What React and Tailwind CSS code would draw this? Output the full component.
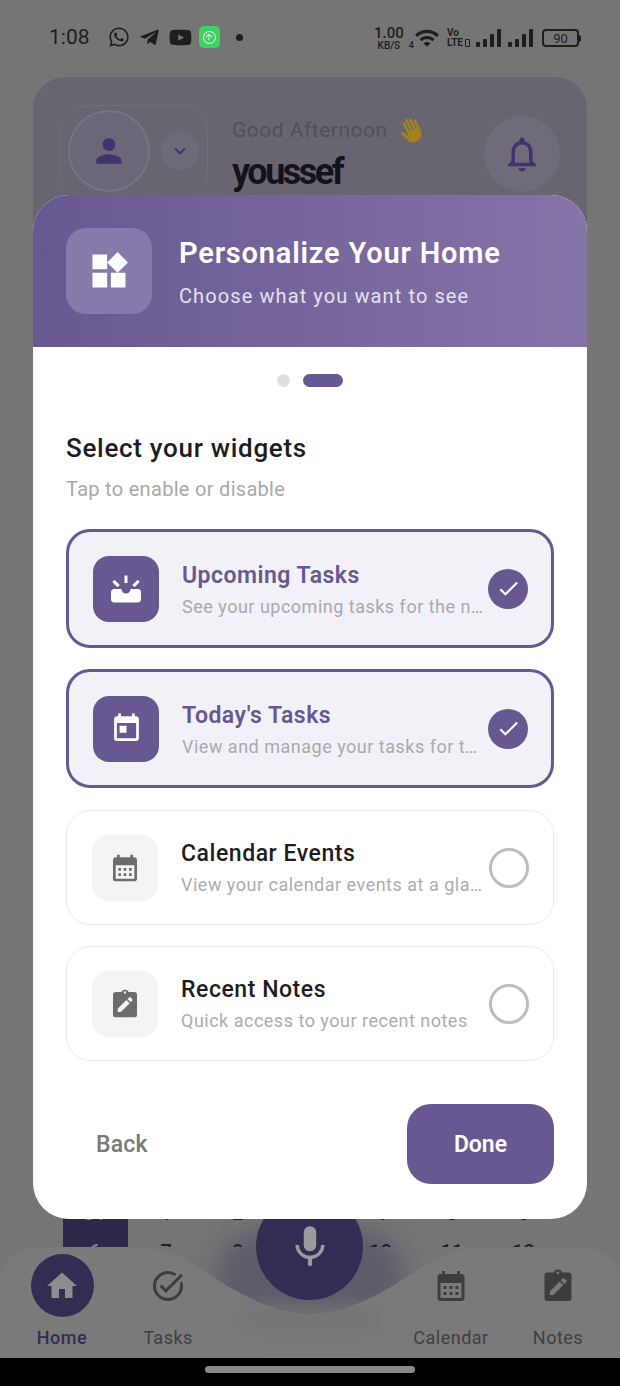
import React from "react";
import { FaWhatsapp, FaTelegramPlane, FaYoutube } from "react-icons/fa";
import {
  MdArrowUpward,
  MdBackHand,
  MdCalendarMonth,
  MdCheck,
  MdHome,
  MdKeyboardArrowDown,
  MdMic,
  MdOutlineNotifications,
  MdOutlineTaskAlt,
  MdPerson,
  MdToday,
  MdUpcoming,
  MdWidgets,
  MdWifi,
} from "react-icons/md";

const font = { fontFamily: "Roboto, sans-serif" };

function NoteIcon({ className }) {
  return (
    <svg viewBox="0 0 24 24" className={className} fill="currentColor">
      <path
        fillRule="evenodd"
        d="M5 3h4.2a3 3 0 0 1 5.6 0H19a2 2 0 0 1 2 2v15a2 2 0 0 1-2 2H5a2 2 0 0 1-2-2V5a2 2 0 0 1 2-2Zm7-.6a.9.9 0 1 0 0 1.8.9.9 0 0 0 0-1.8ZM6.5 18h2.4l6.6-6.6-2.4-2.4-6.6 6.6V18Zm9.8-7.4 1.2-1.2a.7.7 0 0 0 0-1l-1.4-1.4a.7.7 0 0 0-1 0l-1.2 1.2 2.4 2.4Z"
      />
    </svg>
  );
}

function Signal() {
  return (
    <div className="flex items-end gap-[3px]">
      <div className="h-[5px] w-[4px] rounded-[1px] bg-[#1c1c1c]" />
      <div className="h-[8px] w-[4px] rounded-[1px] bg-[#1c1c1c]" />
      <div className="h-[13px] w-[4px] rounded-[1px] bg-[#1c1c1c]" />
      <div className="h-[18px] w-[4px] rounded-[1px] bg-[#1c1c1c]" />
    </div>
  );
}

function StatusBar() {
  return (
    <div className="flex h-[77px] shrink-0 items-start justify-between pl-[49px] pr-[39px] pt-[24px] text-[#1e1e1e]">
      <div className="flex items-center">
        <span className="text-[21px] leading-[26px]">1:08</span>
        <FaWhatsapp className="ml-[18px] text-[22px]" />
        <FaTelegramPlane className="ml-[9px] text-[21px]" />
        <FaYoutube className="ml-[9px] text-[23px]" />
        <div className="ml-[7px] flex h-[22px] w-[21px] items-center justify-center rounded-[5px] bg-[#3bd45f]">
          <div className="flex h-[13px] w-[13px] items-center justify-center rounded-full border border-white">
            <MdArrowUpward className="text-[10px] text-white" />
          </div>
        </div>
        <div className="ml-[16px] h-[7px] w-[7px] rounded-full bg-[#1e1e1e]" />
      </div>
      <div className="flex items-center pt-[1px]">
        <div className="flex flex-col items-center">
          <span className="text-[15px] font-medium leading-[15px]">1.00</span>
          <span className="text-[10px] font-medium leading-[10px]">KB/S</span>
        </div>
        <span className="ml-[5px] self-end text-[9px] font-medium leading-[12px]">4</span>
        <MdWifi className="text-[26px]" />
        <div className="ml-[7px] flex flex-col items-start text-[10px] font-bold leading-[10px]">
          <span>Vo</span>
          <span>LTE</span>
        </div>
        <div className="ml-[2px] mt-[9px] h-[8px] w-[5px] rounded-[1px] border border-[#1e1e1e]" />
        <div className="ml-[6px]">
          <Signal />
        </div>
        <div className="ml-[7px]">
          <Signal />
        </div>
        <div className="ml-[9px] flex h-[18px] w-[37px] items-center justify-center rounded-[4px] border-2 border-[#1e1e1e] text-[13px] leading-none">
          90
        </div>
        <div className="h-[7px] w-[2px] rounded-r bg-[#1e1e1e]" />
      </div>
    </div>
  );
}

function HomeBehind() {
  return (
    <div className="mx-[33px] flex h-[240px] shrink-0 items-start rounded-[32px] bg-[#686571] pl-[27px] pr-[27px] pt-[28px]">
      <div className="flex h-[92px] w-[148px] shrink-0 items-center rounded-[24px] border border-[#716e79] pl-[7px]">
        <div className="flex h-[82px] w-[82px] items-center justify-center rounded-full border-2 border-[#767382] bg-[#6b6778]">
          <MdPerson className="text-[38px] text-[#42336f]" />
        </div>
        <div className="ml-[11px] flex h-[38px] w-[38px] items-center justify-center rounded-full bg-[#6d6a7a]">
          <MdKeyboardArrowDown className="text-[22px] text-[#42336f]" />
        </div>
      </div>
      <div className="ml-[24px] flex-1 pt-[12px]">
        <div className="flex items-center text-[21px] leading-[26px] tracking-[0.5px] text-[#525056]">
          Good Afternoon
          <MdBackHand className="ml-[10px] rotate-[-25deg] text-[25px] text-[#a5801f]" />
        </div>
        <div className="mt-[9px] text-[36px] font-bold leading-[40px] tracking-[-2.5px] text-[#14131c]">youssef</div>
      </div>
      <div className="mt-[11px] flex h-[76px] w-[76px] items-center justify-center rounded-full bg-[#6f6b79]">
        <MdOutlineNotifications className="text-[42px] text-[#42336f]" />
      </div>
    </div>
  );
}

function NavItem({ label, icon, active, className }) {
  return (
    <div className={"flex w-[100px] flex-col items-center " + className}>
      <div className={"flex h-[63px] w-[63px] items-center justify-center rounded-full " + (active ? "bg-[#352c54] text-[#8d8d8d]" : "text-[#3d3d3d]")}>
        {icon}
      </div>
      <span className={"mt-[10px] text-[18px] leading-[21px] tracking-[0.5px] " + (active ? "font-medium text-[#352c54]" : "text-[#3f3f42]")}>
        {label}
      </span>
    </div>
  );
}

function CalendarRow({ days, className }) {
  return (
    <div className={"absolute left-[59px] grid w-[500px] grid-cols-7 text-center text-[20px] font-medium leading-[24px] text-[#232323] " + className}>
      {days.map((d, i) => (
        <span key={d} className={i === 0 ? "text-[#8a8a8a]" : ""}>{d}</span>
      ))}
    </div>
  );
}

function BottomNav() {
  return (
    <div className="absolute inset-x-0 top-[1219px] h-[167px]">
      <div className="ml-[63px] h-[28px] w-[65px] bg-[#2f2848]" />
      <div className="absolute left-[215px] top-[10px] h-[100px] w-[190px] rounded-full bg-[#5f5c6a] blur-[12px]" />
      <div className="absolute inset-x-0 top-0 h-[28px] overflow-hidden">
        <CalendarRow className="top-[-18px]" days={[31, 1, 2, 3, 4, 5, 6]} />
        <CalendarRow className="top-[21px]" days={[6, 7, 8, 9, 10, 11, 12]} />
      </div>
      <svg viewBox="0 0 620 111" className="absolute left-0 top-[28px] h-[111px] w-[620px]">
        <path
          d="M0 111V34C0 12 18 0 45 0H125C165 0 180 8 198 20C225 38 268 67 310 67C352 67 395 38 422 20C440 8 455 0 495 0H575C602 0 620 12 620 34V111Z"
          fill="#7a7a7a"
        />
      </svg>
      <div className="absolute left-[240px] top-[88px] h-[24px] w-[140px] rounded-full bg-[#747474] blur-[10px]" />
      <div className="absolute left-[256px] top-[-26px] flex h-[107px] w-[107px] items-center justify-center rounded-full bg-[#352c54]">
        <MdMic className="text-[50px] text-[#9a9a9a]" />
      </div>
      <div className="absolute inset-x-0 top-[35px] flex">
        <NavItem className="ml-[12px]" label="Home" active icon={<MdHome className="text-[36px]" />} />
        <NavItem className="ml-[6px]" label="Tasks" icon={<MdOutlineTaskAlt className="text-[36px]" />} />
        <NavItem className="ml-[183px]" label="Calendar" icon={<MdCalendarMonth className="text-[36px]" />} />
        <NavItem className="ml-[7px]" label="Notes" icon={<NoteIcon className="h-[36px] w-[36px]" />} />
      </div>
      <div className="absolute inset-x-0 top-[139px] flex h-[28px] justify-center bg-black pt-[8px]">
        <div className="h-[7px] w-[210px] rounded-full bg-[#8a8a8a]" />
      </div>
    </div>
  );
}

function WidgetRow({ title, desc, icon, selected, className = "" }) {
  if (selected) {
    return (
      <div className="flex h-[119px] items-center rounded-[24px] border-[3px] border-[#675891] bg-[#f2f1f7] pl-[24px] pr-[23px]">
        <div className="flex h-[66px] w-[66px] shrink-0 items-center justify-center rounded-[16px] bg-[#675891] text-white">
          {icon}
        </div>
        <div className="ml-[23px] min-w-0 flex-1">
          <div className="pt-[3px] text-[23px] font-semibold leading-[28px] tracking-[0.5px] text-[#675891]">{title}</div>
          <div className="mt-[5px] truncate text-[18px] leading-[24px] tracking-[0.5px] text-[#a9a9ae]">{desc}</div>
        </div>
        <div className="ml-[3px] flex h-[40px] w-[40px] shrink-0 items-center justify-center rounded-full bg-[#675891]">
          <MdCheck className="text-[25px] text-white" />
        </div>
      </div>
    );
  }
  return (
    <div className={"flex h-[115px] items-center rounded-[24px] border border-[#ececec] bg-white pl-[25px] pr-[24px] " + className}>
      <div className="flex h-[66px] w-[66px] shrink-0 items-center justify-center rounded-[16px] bg-[#f4f4f4] text-[#6c6c6c]">
        {icon}
      </div>
      <div className="ml-[23px] min-w-0 flex-1">
        <div className="pt-[1px] text-[23px] font-medium leading-[28px] tracking-[0.55px] text-[#1d1d1f]">{title}</div>
        <div className="mt-[5px] truncate text-[18px] leading-[24px] tracking-[0.5px] text-[#adadad]">{desc}</div>
      </div>
      <div className="ml-[6px] h-[40px] w-[40px] shrink-0 rounded-full border-[3px] border-[#bdbdbd]" />
    </div>
  );
}

function Modal() {
  return (
    <div className="absolute left-[33px] top-[195px] flex h-[1024px] w-[554px] flex-col overflow-hidden rounded-[36px] bg-white">
      <div className="flex h-[152px] shrink-0 items-center bg-gradient-to-r from-[#675891] to-[#8474a8] pl-[33px]">
        <div className="flex h-[86px] w-[86px] items-center justify-center rounded-[20px] bg-[#8779a9]">
          <MdWidgets className="text-[44px] text-white" />
        </div>
        <div className="ml-[27px]">
          <div className="text-[29px] font-semibold leading-[36px] tracking-[0.8px] text-white">Personalize Your Home</div>
          <div className="mt-[13px] text-[20px] leading-[24px] tracking-[1.1px] text-[#e6e2f0]">Choose what you want to see</div>
        </div>
      </div>
      <div className="flex justify-center gap-[13px] pt-[27px]">
        <div className="h-[13px] w-[13px] rounded-full bg-[#dedede]" />
        <div className="h-[13px] w-[40px] rounded-full bg-[#675891]" />
      </div>
      <div className="px-[33px]">
        <div className="mt-[44px] text-[26px] font-medium leading-[34px] tracking-[0.7px] text-[#1d1d1f]">Select your widgets</div>
        <div className="mt-[12px] text-[20px] leading-[24px] tracking-[0.3px] text-[#a9a9a9]">Tap to enable or disable</div>
        <div className="mt-[28px] flex flex-col gap-[21px]">
          <WidgetRow selected title="Upcoming Tasks" desc="See your upcoming tasks for the next few days" icon={<MdUpcoming className="text-[36px]" />} />
          <WidgetRow selected title="Today's Tasks" desc="View and manage your tasks for today" icon={<MdToday className="text-[33px]" />} />
          <WidgetRow className="mt-[1px]" title="Calendar Events" desc="View your calendar events at a glance today" icon={<MdCalendarMonth className="text-[32px]" />} />
          <WidgetRow title="Recent Notes" desc="Quick access to your recent notes" icon={<NoteIcon className="h-[32px] w-[32px]" />} />
        </div>
        <div className="mt-[43px] flex items-center justify-between">
          <span className="pl-[30px] pt-[2px] text-[23px] font-medium tracking-[0.2px] text-[#7a7a7a]">Back</span>
          <div className="flex h-[80px] w-[147px] items-center justify-center rounded-[24px] bg-[#675891] pt-[2px] text-[23px] font-semibold text-white">
            Done
          </div>
        </div>
      </div>
    </div>
  );
}

export default function App() {
  return (
    <div className="relative flex h-[1386px] w-[620px] flex-col overflow-hidden bg-[#757575]" style={font}>
      <StatusBar />
      <HomeBehind />
      <BottomNav />
      <Modal />
    </div>
  );
}
